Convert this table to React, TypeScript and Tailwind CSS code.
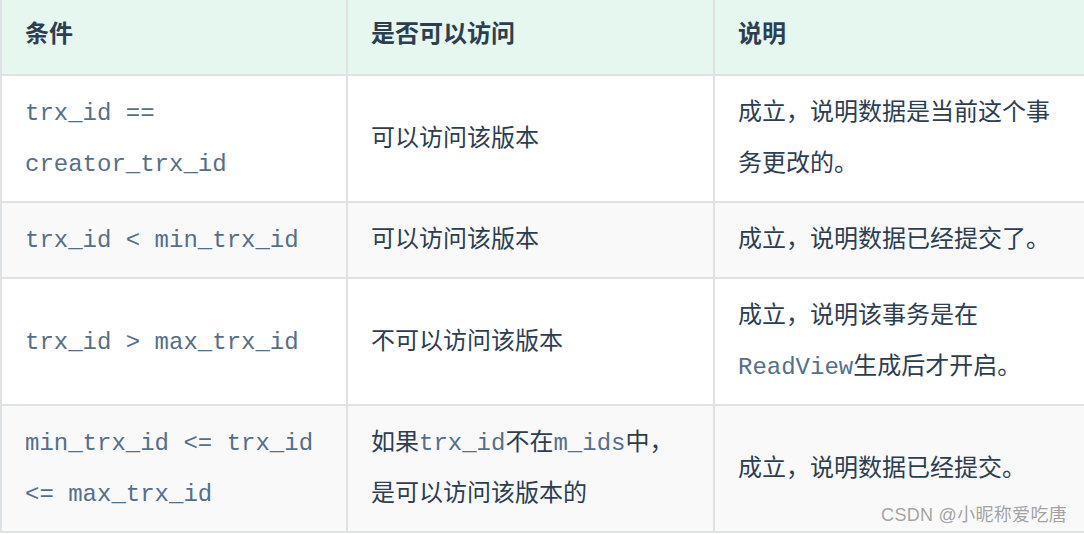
import React from 'react';

const mono = "font-['Liberation_Mono','Courier_New',monospace] text-[#566f88] leading-none";

function Code({ children }: { children: React.ReactNode }) {
  return <code className={mono}>{children}</code>;
}

const ROWS: { cond: React.ReactNode; access: React.ReactNode; note: React.ReactNode }[] = [
  {
    cond: <Code>trx_id == creator_trx_id</Code>,
    access: '可以访问该版本',
    note: '成立，说明数据是当前这个事务更改的。',
  },
  {
    cond: <Code>trx_id &lt; min_trx_id</Code>,
    access: '可以访问该版本',
    note: '成立，说明数据已经提交了。',
  },
  {
    cond: <Code>trx_id &gt; max_trx_id</Code>,
    access: '不可以访问该版本',
    note: (
      <>
        成立，说明该事务是在<Code>ReadView</Code>生成后才开启。
      </>
    ),
  },
  {
    cond: <Code>min_trx_id &lt;= trx_id &lt;= max_trx_id</Code>,
    access: (
      <>
        如果<Code>trx_id</Code>不在<Code>m_ids</Code>中，是可以访问该版本的
      </>
    ),
    note: '成立，说明数据已经提交。',
  },
];

const cell = 'border-2 border-[#dfe2e5] px-[23px] pt-[8px] pb-[15px] leading-[51px] align-middle';

export default function App() {
  return (
    <div className="relative w-[1084px] h-[534px] overflow-hidden bg-white font-['Noto_Sans_CJK_SC','Noto_Sans',sans-serif] text-[24px] text-[#2c3e50]">
      <table className="border-collapse table-fixed w-[1093px] -mt-[2px]">
        <colgroup>
          <col className="w-[346px]" />
          <col className="w-[367px]" />
          <col className="w-[380px]" />
        </colgroup>
        <thead>
          <tr className="bg-[#e6f7f0]">
            {['条件', '是否可以访问', '说明'].map((h) => (
              <th
                key={h}
                className="border-2 border-[#dfe2e5] px-[23px] pt-[6px] pb-[17px] leading-[51px] text-left font-bold align-middle"
              >
                {h}
              </th>
            ))}
          </tr>
        </thead>
        <tbody>
          {ROWS.map((r, i) => (
            <tr key={i} className={i % 2 === 1 ? 'bg-[#f9f9f9]' : 'bg-white'}>
              <td className={cell}>{r.cond}</td>
              <td className={cell}>{r.access}</td>
              <td className={cell}>{r.note}</td>
            </tr>
          ))}
        </tbody>
      </table>
      <div className="absolute right-[17px] bottom-[8px] text-[18px] leading-[22px] tracking-[0.3px] text-[#a3a3a3] font-['Liberation_Sans','Noto_Sans_CJK_SC',sans-serif] [text-shadow:0_0_2px_#fff]">
        CSDN @小昵称爱吃唐
      </div>
    </div>
  );
}
